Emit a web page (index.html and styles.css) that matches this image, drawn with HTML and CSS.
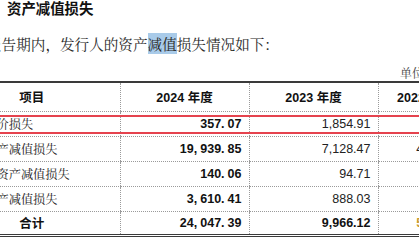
FILE: index.html
```html
<!DOCTYPE html>
<html lang="zh-CN">
<head>
    <meta charset="UTF-8">
    <meta name="viewport" content="width=device-width, initial-scale=1.0">
    <title>资产减值损失</title>
    <link rel="stylesheet" href="styles.css">
</head>
<body>
    <div class="mark"></div>
    <h3 class="title">资产减值损失</h3>
    <p class="intro">报告期内，发行人的资产<span class="hl">减值</span>损失情况如下：</p>
    <div class="sheet">
        <div class="unit">单位：万元</div>
        <table class="grid">
            <colgroup>
                <col class="c-name">
                <col class="c-year">
                <col class="c-year">
                <col class="c-last">
            </colgroup>
            <thead>
                <tr>
                    <th class="name">项目</th>
                    <th>2024 年度</th>
                    <th>2023 年度</th>
                    <th>2022 年度</th>
                </tr>
            </thead>
            <tbody>
                <tr>
                    <td class="name">存货跌价损失</td>
                    <td class="num strong">357<span class="pt">.</span>07</td>
                    <td class="num">1,854.91</td>
                    <td class="num">612.30</td>
                </tr>
                <tr>
                    <td class="name">合同资产减值损失</td>
                    <td class="num strong">19<span class="pt">,</span>939<span class="pt">.</span>85</td>
                    <td class="num">7,128.47</td>
                    <td class="num">4,213.65</td>
                </tr>
                <tr>
                    <td class="name">使用权资产减值损失</td>
                    <td class="num strong">140<span class="pt">.</span>06</td>
                    <td class="num">94.71</td>
                    <td class="num">85.20</td>
                </tr>
                <tr>
                    <td class="name">固定资产减值损失</td>
                    <td class="num strong">3<span class="pt">,</span>610<span class="pt">.</span>41</td>
                    <td class="num">888.03</td>
                    <td class="num">301.44</td>
                </tr>
                <tr class="total">
                    <td class="name">合计</td>
                    <td class="num strong">24<span class="pt">,</span>047<span class="pt">.</span>39</td>
                    <td class="num strong">9,966.12</td>
                    <td class="num strong gold">5,212.59</td>
                </tr>
            </tbody>
        </table>
    </div>
</body>
</html>
```

FILE: styles.css
```css
*{
    margin: 0;
    padding: 0;
    box-sizing: border-box;
}
html, body{
    overflow: hidden;
    background: #ffffff;
}
body{
    width: 419px;
    height: 240px;
    position: relative;
    color: #1a1a1a;
    font-family: "Noto Serif CJK SC", "Noto Sans CJK SC", serif;
}
.title{
    margin-left: 7px;
    height: 16px;
    line-height: 16px;
    font-size: 14.4px;
    font-weight: bold;
    font-family: "Noto Sans CJK SC", sans-serif;
    color: #111111;
}
.intro{
    margin-top: 19px;
    margin-left: -13px;
    height: 18px;
    line-height: 18px;
    font-size: 14.6px;
    white-space: nowrap;
    color: #2a2a2a;
}
.hl{
    background: #a9cbe9;
}
.sheet{
    margin-left: -56px;
    width: 528px;
}
.unit{
    margin-top: 13px;
    height: 14px;
    line-height: 14px;
    font-size: 12px;
    text-align: right;
    color: #444444;
    padding-right: 12px;
}
.grid{
    margin-top: 1px;
    width: 528px;
    border-collapse: collapse;
    table-layout: fixed;
    border-top: 2px solid #3a3a3a;
    border-bottom: 3px double #3a3a3a;
    font-size: 12.5px;
}
.c-name{
    width: 176px;
}
.c-year{
    width: 129px;
}
.c-last{
    width: 94px;
}
.grid th, .grid td{
    border-left: 1px dotted #9a9a9a;
    border-bottom: 1px dotted #9a9a9a;
    white-space: nowrap;
    overflow: hidden;
}
.grid th:first-child, .grid td:first-child{
    border-left: none;
}
.grid th{
    height: 29px;
    font-weight: bold;
    font-family: "Liberation Sans", "Noto Sans CJK SC", sans-serif;
    text-align: center;
    color: #111111;
}
.grid td{
    height: 25px;
}
.grid .total td{
    height: 24px;
    border-bottom: none;
}
td.name{
    padding-left: 16px;
    font-size: 12.2px;
    color: #222222;
}
.total td.name{
    padding-left: 0;
    text-align: center;
    font-weight: bold;
    font-family: "Noto Sans CJK SC", sans-serif;
    font-size: 12.5px;
    color: #111111;
}
td.num{
    text-align: right;
    padding-right: 7px;
    font-family: "Liberation Sans", sans-serif;
    color: #222222;
}
td.strong{
    font-weight: bold;
    color: #111111;
}
.pt{
    margin-right: 3px;
}
td.gold{
    color: #c99a2e;
}
.mark{
    position: absolute;
    left: -10px;
    right: -10px;
    top: 115px;
    height: 19px;
    border-top: 2px solid #e5434e;
    border-bottom: 2px solid #e5434e;
    z-index: 2;
}
```
